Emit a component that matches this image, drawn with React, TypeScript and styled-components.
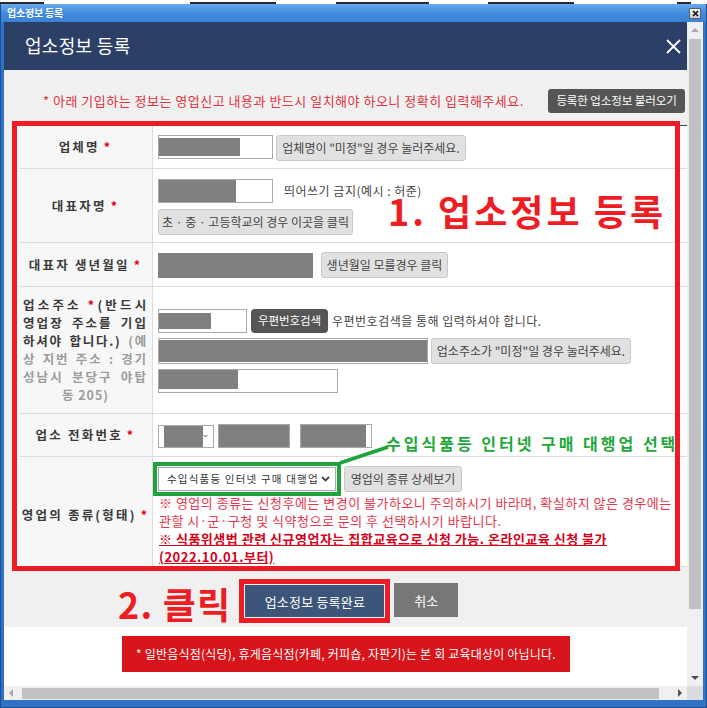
import React from 'react'
import styled, { createGlobalStyle } from 'styled-components'

const GlobalStyle = createGlobalStyle`
  html, body { margin: 0; padding: 0; background: #fff; }
  body { font-family: "Noto Sans CJK KR", "Noto Sans", sans-serif; line-height: 1.2; }
  * { box-sizing: border-box; }
`

type Dir = 'up' | 'down' | 'left' | 'right'

const triangle = (dir: Dir, c: string) => {
    switch (dir) {
        case 'up': return `border-width: 0 4px 4px; border-color: transparent transparent ${c};`
        case 'down': return `border-width: 4px 4px 0; border-color: ${c} transparent transparent;`
        case 'left': return `border-width: 4px 4px 4px 0; border-color: transparent ${c} transparent transparent;`
        default: return `border-width: 4px 0 4px 4px; border-color: transparent transparent transparent ${c};`
    }
}

/* ---------- window chrome ---------- */
const Page = styled.div`
  width: 707px; height: 708px; overflow: hidden;
  display: flex; flex-direction: column;
`
const TopStrip = styled.div`
  height: 4px; flex: none; background: #fff;
  display: flex; align-items: flex-end;
`
const Smudge = styled.span<{ $gap: number; $w: number }>`
  margin-left: ${p => p.$gap}px; width: ${p => p.$w}px; height: 2px; background: #2a2a2a;
`
const Window = styled.div`
  flex: 1; min-height: 0;
  display: flex; flex-direction: column;
  background: #2f73c6;
  border: 1px solid #1c4f8f; border-top: none;
`
const TitleBar = styled.div`
  height: 18px; flex: none;
  display: flex; align-items: center; justify-content: space-between;
  padding: 0 5px 0 6px;
  background: linear-gradient(#66a9ef, #4189dc 55%, #3a82d6);
`
const TitleText = styled.span`
  color: #fff; font-size: 10px; font-weight: 700; letter-spacing: -0.2px;
`
const TitleClose = styled.span`
  width: 12px; height: 11px;
  border: 1px solid #5e5e5e;
  background: linear-gradient(#f6f6f6, #d0d0d0);
  display: flex; align-items: center; justify-content: center;
`
const Frame = styled.div`
  flex: 1; min-height: 0; display: flex;
  padding: 0 3px 7px;
`
const Viewport = styled.div`
  flex: 1; min-width: 0; display: flex; flex-direction: column;
`
const ViewRow = styled.div`
  flex: 1; min-height: 0; display: flex;
`
const Content = styled.div`
  flex: 1; min-width: 0; overflow: hidden;
  display: flex; flex-direction: column; background: #fff;
`

/* ---------- scrollbars ---------- */
const VScroll = styled.div`
  width: 16px; flex: none; background: #f0f0f0;
  display: flex; flex-direction: column; align-items: center;
`
const HRow = styled.div`
  height: 14px; flex: none; display: flex;
`
const HScroll = styled.div`
  flex: 1; background: #f0f0f0; display: flex; align-items: center;
`
const ArrowCell = styled.span<{ $w?: number; $h?: number }>`
  flex: none;
  width: ${p => (p.$w ? `${p.$w}px` : '100%')};
  height: ${p => (p.$h ? `${p.$h}px` : '100%')};
  display: flex; align-items: center; justify-content: center;
`
const Tri = styled.span<{ $dir: Dir; $c: string }>`
  width: 0; height: 0; border-style: solid;
  ${p => triangle(p.$dir, p.$c)}
`
const Thumb = styled.span<{ $w: number; $h: number; $mt?: number; $ml?: number }>`
  flex: none; background: #c1c1c1;
  width: ${p => p.$w}px; height: ${p => p.$h}px;
  margin-top: ${p => p.$mt ?? 0}px; margin-left: ${p => p.$ml ?? 0}px;
`
const Spacer = styled.span`
  flex: 1;
`
const Corner = styled.span`
  width: 16px; flex: none; background: #dcdcdc;
`

/* ---------- dialog ---------- */
const Header = styled.div`
  height: 48px; flex: none; background: #2c3f67;
  display: flex; align-items: center; justify-content: space-between;
  padding: 0 6px 0 21px;
`
const HeaderTitle = styled.h1`
  margin: 0; color: #fff; font-size: 18px; font-weight: 400; letter-spacing: 0.3px;
`
const GreyArea = styled.div`
  flex: none; background: #f0f0f0;
  padding: 19px 0 9px;
`
const NoticeRow = styled.div`
  height: 24px;
  display: flex; align-items: center; justify-content: space-between;
  padding: 0 2px 0 39px;
`
const NoticeText = styled.p`
  margin: 0; color: #e4323e; font-size: 13px; letter-spacing: 0.5px; white-space: nowrap;
`
const DarkButton = styled.span<{ $w: number; $h: number; $r?: number }>`
  flex: none; width: ${p => p.$w}px; height: ${p => p.$h}px;
  background: #555; color: #fff; border-radius: ${p => p.$r ?? 3}px;
  font-size: 11.5px; letter-spacing: -0.1px; line-height: 1; white-space: nowrap;
  display: inline-flex; align-items: center; justify-content: center;
`
const LightButton = styled.span<{ $w: number; $h: number }>`
  flex: none; width: ${p => p.$w}px; height: ${p => p.$h}px;
  background: #e1e1e1; border: 1px solid #c9c9c9; border-radius: 3px;
  color: #444; font-size: 12px; letter-spacing: 0; line-height: 1; white-space: nowrap;
  display: inline-flex; align-items: center; justify-content: center;
`

/* ---------- table ---------- */
const TableWrap = styled.div`
  position: relative;
  margin: 12px 0 0 13px; width: 672px;
`
const Table = styled.div`
  display: grid; grid-template-columns: 134px 1fr;
  border-top: 1px solid #444; border-left: 2px solid #fff;
  background: #fff;
`
const LabelCell = styled.div<{ $pt?: number }>`
  background: #f7f7f7;
  border-right: 1px solid #dcdcdc; border-bottom: 1px solid #dcdcdc;
  display: flex; align-items: center; justify-content: center;
  padding: ${p => p.$pt ?? 0}px 4px 0;
  color: #3a3a3a; font-size: 12.5px; font-weight: 700; letter-spacing: 2.2px;
  line-height: 18px; white-space: nowrap;
`
const LabelBlock = styled.div`
  width: 100%;
`
const LabelLine = styled.div<{ $ls: number; $center?: boolean }>`
  letter-spacing: ${p => p.$ls}px; white-space: nowrap;
  text-align: justify;
  text-align-last: ${p => (p.$center ? 'center' : 'justify')};
`
const Req = styled.span<{ $ml?: number }>`
  color: #e60012; font-weight: 700; margin-left: ${p => p.$ml ?? 4}px;
`
const Muted = styled.span`
  color: #9c9c9c;
`
const ValueCell = styled.div<{ $pad: string }>`
  border-bottom: 1px solid #dcdcdc;
  padding: ${p => p.$pad};
  display: flex; flex-direction: column; align-items: flex-start;
`
const Line = styled.div<{ $gap?: number; $mt?: number; $align?: string }>`
  display: flex; align-items: ${p => p.$align ?? 'center'};
  gap: ${p => p.$gap ?? 0}px; margin-top: ${p => p.$mt ?? 0}px;
`
const Field = styled.span<{ $w: number; $h: number; $ml?: number }>`
  flex: none; width: ${p => p.$w}px; height: ${p => p.$h}px;
  margin-left: ${p => p.$ml ?? 0}px;
  border: 1px solid #a9a9a9; background: #fff; overflow: hidden;
  display: flex; align-items: center;
`
const Redact = styled.span<{ $w: number; $h: number; $top?: boolean }>`
  flex: none; width: ${p => p.$w}px; height: ${p => p.$h}px;
  background: #808080;
  align-self: ${p => (p.$top ? 'flex-start' : 'center')};
`
const Hint = styled.span`
  color: #444; font-size: 12px; letter-spacing: 0.5px; line-height: 1; white-space: nowrap;
`
const SelectBox = styled.span<{ $w: number; $h: number; $ring?: boolean }>`
  flex: none; width: ${p => p.$w}px; height: ${p => p.$h}px;
  border: 1px solid #aaa; background: #fff;
  display: flex; align-items: center; justify-content: space-between;
  padding: 0 5px 0 5px;
  ${p => (p.$ring ? 'outline: 4px solid #1fa33c; outline-offset: 1px; padding: 0 5px 0 8px;' : '')}
`
const SelectText = styled.span`
  color: #333; font-size: 10.5px; letter-spacing: 1.2px; white-space: nowrap;
`
const GreenNote = styled.span`
  margin-left: 14px; align-self: flex-end; margin-bottom: -4px;
  color: #1ea83c; font-size: 16px; font-weight: 700; letter-spacing: 3px;
  line-height: 18px; white-space: nowrap;
`
const Warn = styled.div`
  margin-top: 2px; padding-left: 1px;
`
const WarnLine = styled.div<{ $strong?: boolean }>`
  font-size: 13px; line-height: 18px; letter-spacing: 0.5px; white-space: nowrap;
  color: ${p => (p.$strong ? '#d7001a' : '#e8344a')};
  font-weight: ${p => (p.$strong ? 700 : 400)};
  text-decoration: ${p => (p.$strong ? 'underline' : 'none')};
`

/* ---------- annotations drawn over the form ---------- */
const RedFrame = styled.div`
  position: absolute; left: -5px; top: -4px; width: 668px; height: 450px;
  border: 5px solid #ed1c24; pointer-events: none;
`
const MarkSpot = styled.div<{ $x: number; $y: number }>`
  position: absolute; left: ${p => p.$x}px; top: ${p => p.$y}px;
`
const BigMark = styled.span<{ $ls?: number; $lh?: number }>`
  display: block; color: #ee1d23; font-size: 36px; font-weight: 700;
  line-height: ${p => p.$lh ?? 1};
  letter-spacing: ${p => p.$ls ?? 0}px; white-space: nowrap;
`
const Callout = styled.svg`
  position: absolute; left: 320px; top: 318px; overflow: visible;
`

/* ---------- footer ---------- */
const FooterRow = styled.div`
  height: 35px; margin-top: 16px;
  display: flex; align-items: flex-start;
  padding-left: 114px;
  & > ${BigMark} { margin-top: 2px; margin-right: 14px; }
`
const ActionButton = styled.span<{ $bg: string; $w: number; $h: number; $mt?: number; $ring?: boolean; $ml?: number }>`
  flex: none; width: ${p => p.$w}px; height: ${p => p.$h}px;
  margin-top: ${p => p.$mt ?? 0}px; margin-left: ${p => p.$ml ?? 0}px;
  background: ${p => p.$bg}; color: #fff;
  font-size: 13px; letter-spacing: 0.2px; line-height: 1; white-space: nowrap;
  display: inline-flex; align-items: center; justify-content: center;
  ${p => (p.$ring ? 'outline: 5px solid #ed1c24; outline-offset: 1px;' : '')}
`
const WhiteArea = styled.div`
  flex: 1; background: #fff; padding: 9px 0 0 118px;
`
const AlertBox = styled.div`
  width: 448px; height: 36px; background: #d7151b; color: #fff;
  font-size: 12px; letter-spacing: 0.2px; white-space: nowrap;
  display: flex; align-items: center; justify-content: center;
`

const smudges = [
    { gap: 0, w: 44 }, { gap: 146, w: 86 }, { gap: 60, w: 93 }, { gap: 59, w: 86 }, { gap: 103, w: 14 },
]

const Chevron: React.FC<{ c?: string }> = ({ c = '#555' }) => (
    <svg width="9" height="6" viewBox="0 0 9 6" fill="none">
        <polyline points="1,1 4.5,4.5 8,1" stroke={c} strokeWidth="1.8" />
    </svg>
)

const App: React.FC = () => {
    return (
        <>
            <GlobalStyle />
            <Page>
                <TopStrip>
                    {smudges.map((s, i) => <Smudge key={i} $gap={s.gap} $w={s.w} />)}
                </TopStrip>
                <Window>
                    <TitleBar>
                        <TitleText>업소정보 등록</TitleText>
                        <TitleClose>
                            <svg width="7" height="7" viewBox="0 0 7 7">
                                <path d="M1 1L6 6M6 1L1 6" stroke="#111" strokeWidth="1.7" />
                            </svg>
                        </TitleClose>
                    </TitleBar>
                    <Frame>
                        <Viewport>
                            <ViewRow>
                                <Content>
                                    <Header>
                                        <HeaderTitle>업소정보 등록</HeaderTitle>
                                        <svg width="15" height="15" viewBox="0 0 15 15">
                                            <path d="M1 1L14 14M14 1L1 14" stroke="#fff" strokeWidth="1.8" />
                                        </svg>
                                    </Header>

                                    <GreyArea>
                                        <NoticeRow>
                                            <NoticeText>* 아래 기입하는 정보는 영업신고 내용과 반드시 일치해야 하오니 정확히 입력해주세요.</NoticeText>
                                            <DarkButton $w={137} $h={24}>등록한 업소정보 불러오기</DarkButton>
                                        </NoticeRow>

                                        <TableWrap>
                                            <Table>
                                                {/* 업체명 */}
                                                <LabelCell>업체명<Req>*</Req></LabelCell>
                                                <ValueCell $pad="9px 5px 7px">
                                                    <Line $gap={3} $align="flex-start">
                                                        <Field $w={115} $h={24}><Redact $w={81} $h={18} /></Field>
                                                        <LightButton $w={190} $h={26}>업체명이 "미정"일 경우 눌러주세요.</LightButton>
                                                    </Line>
                                                </ValueCell>

                                                {/* 대표자명 */}
                                                <LabelCell>대표자명<Req>*</Req></LabelCell>
                                                <ValueCell $pad="10px 5px 7px">
                                                    <Line $gap={11}>
                                                        <Field $w={115} $h={24}><Redact $w={77} $h={22} $top /></Field>
                                                        <Hint>띄어쓰기 금지(예시 : 허준)</Hint>
                                                    </Line>
                                                    <Line $mt={6}>
                                                        <LightButton $w={195} $h={26}>초 · 중 · 고등학교의 경우 이곳을 클릭</LightButton>
                                                    </Line>
                                                </ValueCell>

                                                {/* 대표자 생년월일 */}
                                                <LabelCell>대표자 생년월일<Req>*</Req></LabelCell>
                                                <ValueCell $pad="9px 5px 8px">
                                                    <Line $gap={8}>
                                                        <Redact $w={155} $h={25} />
                                                        <LightButton $w={127} $h={26}>생년월일 모를경우 클릭</LightButton>
                                                    </Line>
                                                </ValueCell>

                                                {/* 업소주소 */}
                                                <LabelCell>
                                                    <LabelBlock>
                                                        <LabelLine $ls={3.2}>업소주소 <Req $ml={0}>*</Req>(반드시</LabelLine>
                                                        <LabelLine $ls={2.1}>영업장 주소를 기입</LabelLine>
                                                        <LabelLine $ls={1.7}>하셔야 합니다.) <Muted>(예</Muted></LabelLine>
                                                        <LabelLine $ls={1.9}><Muted>상 지번 주소 : 경기</Muted></LabelLine>
                                                        <LabelLine $ls={2.1}><Muted>성남시 분당구 야탑</Muted></LabelLine>
                                                        <LabelLine $ls={1} $center><Muted>동 205)</Muted></LabelLine>
                                                    </LabelBlock>
                                                </LabelCell>
                                                <ValueCell $pad="22px 5px 20px">
                                                    <Line $gap={4}>
                                                        <Field $w={89} $h={24}><Redact $w={52} $h={16} /></Field>
                                                        <DarkButton $w={77} $h={24} $r={4}>우편번호검색</DarkButton>
                                                        <Hint>우편번호검색을 통해 입력하셔야 합니다.</Hint>
                                                    </Line>
                                                    <Line $gap={3} $mt={5}>
                                                        <Field $w={270} $h={26}><Redact $w={268} $h={22} /></Field>
                                                        <LightButton $w={200} $h={26}>업소주소가 "미정"일 경우 눌러주세요.</LightButton>
                                                    </Line>
                                                    <Line $mt={5}>
                                                        <Field $w={180} $h={24}><Redact $w={79} $h={19} $top /></Field>
                                                    </Line>
                                                </ValueCell>

                                                {/* 업소 전화번호 */}
                                                <LabelCell>업소 전화번호<Req>*</Req></LabelCell>
                                                <ValueCell $pad="10px 5px 8px">
                                                    <Line>
                                                        <SelectBox $w={56} $h={23}>
                                                            <Redact $w={39} $h={21} />
                                                            <Chevron />
                                                        </SelectBox>
                                                        <Field $w={72} $h={24} $ml={4}><Redact $w={72} $h={24} /></Field>
                                                        <Field $w={72} $h={24} $ml={10}><Redact $w={65} $h={22} /></Field>
                                                        <GreenNote>수입식품등 인터넷 구매 대행업 선택</GreenNote>
                                                    </Line>
                                                </ValueCell>

                                                {/* 영업의 종류 */}
                                                <LabelCell $pt={7}>영업의 종류(형태)<Req>*</Req></LabelCell>
                                                <ValueCell $pad="9px 5px 0">
                                                    <Line $gap={8}>
                                                        <SelectBox $w={178} $h={24} $ring>
                                                            <SelectText>수입식품등 인터넷 구매 대행업</SelectText>
                                                            <Chevron c="#444" />
                                                        </SelectBox>
                                                        <LightButton $w={118} $h={26}>영업의 종류 상세보기</LightButton>
                                                    </Line>
                                                    <Warn>
                                                        <WarnLine>※ 영업의 종류는 신청후에는 변경이 불가하오니 주의하시기 바라며, 확실하지 않은 경우에는</WarnLine>
                                                        <WarnLine>관할 시·군·구청 및 식약청으로 문의 후 선택하시기 바랍니다.</WarnLine>
                                                        <WarnLine $strong>※ 식품위생법 관련 신규영업자는 집합교육으로 신청 가능. 온라인교육 신청 불가</WarnLine>
                                                        <WarnLine $strong>(2022.10.01.부터)</WarnLine>
                                                    </Warn>
                                                </ValueCell>
                                            </Table>

                                            <RedFrame />
                                            <MarkSpot $x={371} $y={72}>
                                                <BigMark $ls={3} $lh={0.75}>1. 업소정보 등록</BigMark>
                                            </MarkSpot>
                                            <Callout width="54" height="24" viewBox="0 0 54 24">
                                                <line x1="3" y1="20" x2="51" y2="4" stroke="#1fa33c" strokeWidth="3.5" />
                                            </Callout>
                                        </TableWrap>

                                        <FooterRow>
                                            <BigMark $ls={1.2}>2. 클릭</BigMark>
                                            <ActionButton $bg="#3d5579" $w={139} $h={32} $mt={2} $ring>업소정보 등록완료</ActionButton>
                                            <ActionButton $bg="#777" $w={64} $h={34} $ml={10}>취소</ActionButton>
                                        </FooterRow>
                                    </GreyArea>

                                    <WhiteArea>
                                        <AlertBox>* 일반음식점(식당), 휴게음식점(카페, 커피숍, 자판기)는 본 회 교육대상이 아닙니다.</AlertBox>
                                    </WhiteArea>
                                </Content>

                                <VScroll>
                                    <ArrowCell $h={16}><Tri $dir="up" $c="#a8a8a8" /></ArrowCell>
                                    <Thumb $w={12} $h={570} $mt={1} />
                                    <Spacer />
                                    <ArrowCell $h={16}><Tri $dir="down" $c="#505050" /></ArrowCell>
                                </VScroll>
                            </ViewRow>
                            <HRow>
                                <HScroll>
                                    <ArrowCell $w={14}><Tri $dir="left" $c="#a8a8a8" /></ArrowCell>
                                    <Thumb $w={637} $h={11} $ml={4} />
                                    <Spacer />
                                    <ArrowCell $w={14}><Tri $dir="right" $c="#505050" /></ArrowCell>
                                </HScroll>
                                <Corner />
                            </HRow>
                        </Viewport>
                    </Frame>
                </Window>
            </Page>
        </>
    )
}

export default App
